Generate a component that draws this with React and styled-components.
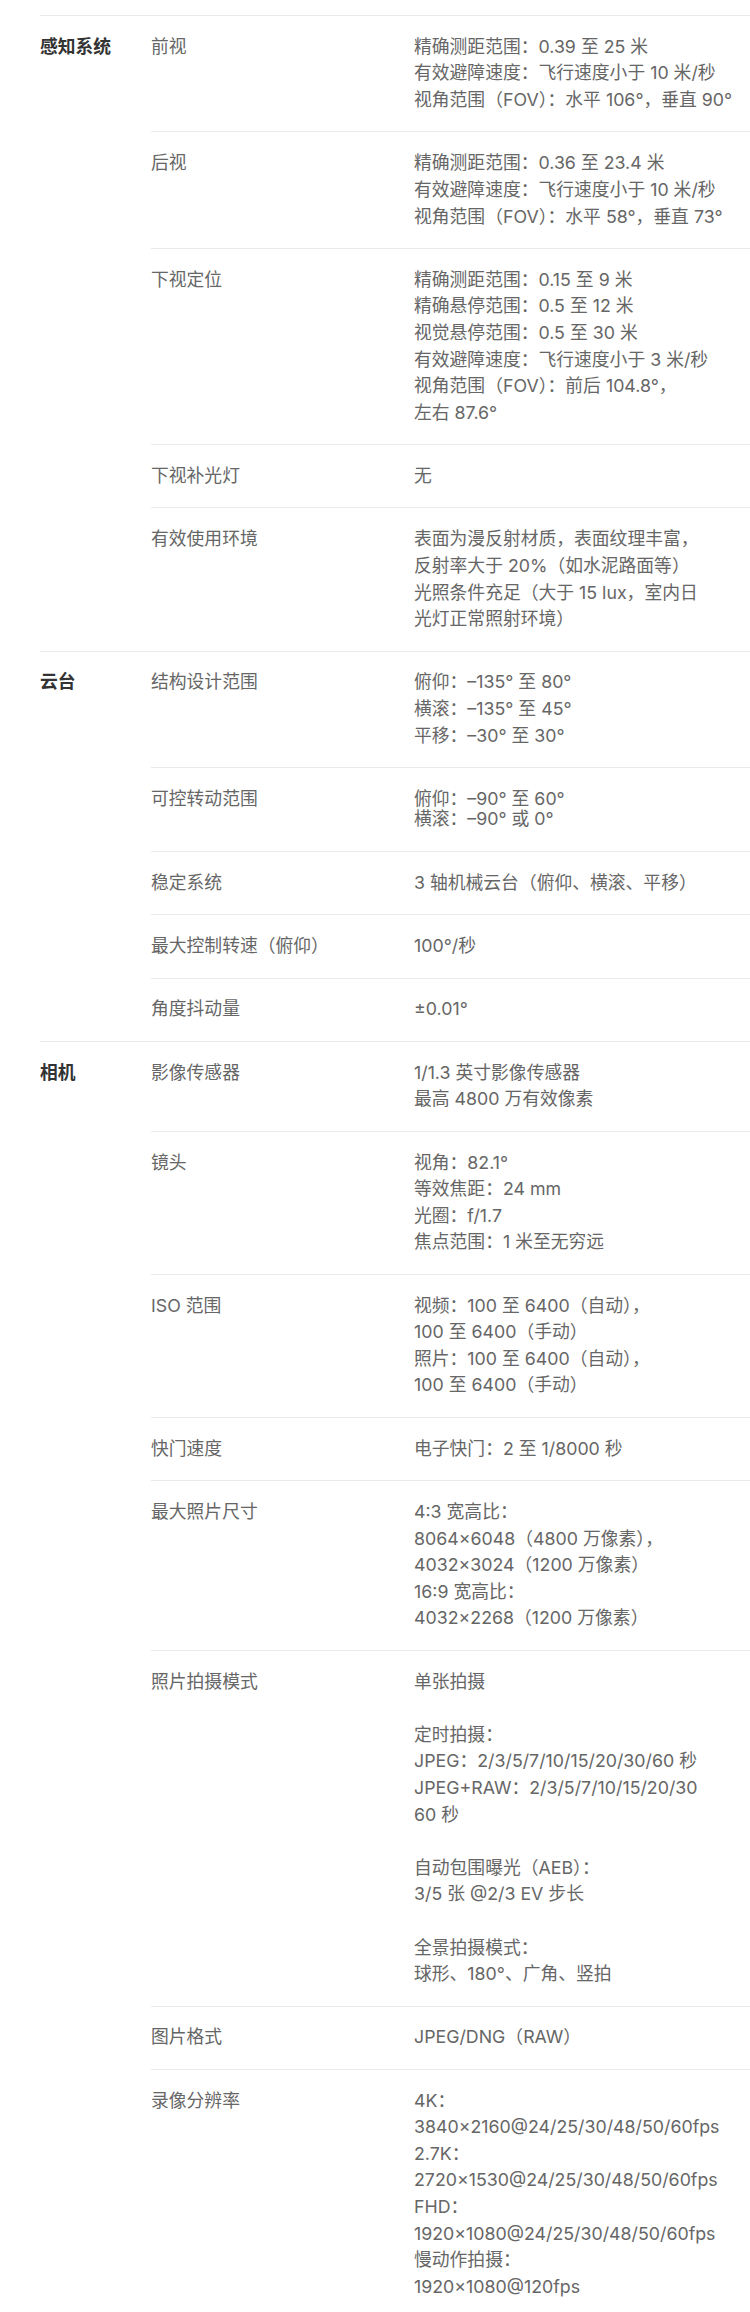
import React from 'react';
import styled, { createGlobalStyle } from 'styled-components';

const GlobalStyle = createGlobalStyle`
  html, body {
    margin: 0;
    padding: 0;
    background: #ffffff;
  }
  body {
    font-family: Inter, "Noto Sans CJK SC", sans-serif;
    -webkit-font-smoothing: antialiased;
    overflow-x: hidden;
  }
`;

const Page = styled.main`
  padding: 15px 0 0 40px;
  width: 750px;
  box-sizing: border-box;
`;

const Category = styled.section`
  display: grid;
  grid-template-columns: 111px 1fr;
  border-top: 1px solid #ebebeb;
`;

const CategoryTitle = styled.h3`
  margin: 0;
  padding: 17.85px 0;
  font-size: 17.8px;
  line-height: 26.6px;
  font-weight: 700;
  color: #333333;
`;

const Rows = styled.div`
  display: flex;
  flex-direction: column;
`;

const Row = styled.div`
  display: grid;
  grid-template-columns: 263px 1fr;
  align-items: start;
  padding: 17.85px 0;
  border-top: ${(p) => (p.$first ? 'none' : '1px solid #ebebeb')};
`;

const Label = styled.div`
  font-size: 17.8px;
  line-height: 26.6px;
  height: 26.6px;
  overflow: hidden;
  color: #666666;
`;

const Value = styled.div`
  font-size: 17.8px;
  padding: ${(p) => (p.$tight ? '3px 0 4.3px' : '0')};
  color: #666666;
`;

const Line = styled.div`
  white-space: nowrap;
  line-height: ${(p) => (p.$tight ? '20px' : '26.6px')};
  height: ${(p) => (p.$tight ? '20px' : '26.6px')};
`;

const data = [
  {
    title: '感知系统',
    rows: [
      {
        label: '前视',
        lines: [
          '精确测距范围：0.39 至 25 米',
          '有效避障速度：飞行速度小于 10 米/秒',
          '视角范围（FOV）：水平 106°，垂直 90°',
        ],
      },
      {
        label: '后视',
        lines: [
          '精确测距范围：0.36 至 23.4 米',
          '有效避障速度：飞行速度小于 10 米/秒',
          '视角范围（FOV）：水平 58°，垂直 73°',
        ],
      },
      {
        label: '下视定位',
        lines: [
          '精确测距范围：0.15 至 9 米',
          '精确悬停范围：0.5 至 12 米',
          '视觉悬停范围：0.5 至 30 米',
          '有效避障速度：飞行速度小于 3 米/秒',
          '视角范围（FOV）：前后 104.8°，',
          '左右 87.6°',
        ],
      },
      { label: '下视补光灯', lines: ['无'] },
      {
        label: '有效使用环境',
        lines: [
          '表面为漫反射材质，表面纹理丰富，',
          '反射率大于 20%（如水泥路面等）',
          '光照条件充足（大于 15 lux，室内日',
          '光灯正常照射环境）',
        ],
      },
    ],
  },
  {
    title: '云台',
    rows: [
      {
        label: '结构设计范围',
        lines: ['俯仰：–135° 至 80°', '横滚：–135° 至 45°', '平移：–30° 至 30°'],
      },
      {
        label: '可控转动范围',
        tight: true,
        lines: ['俯仰：–90° 至 60°', '横滚：–90° 或 0°'],
      },
      { label: '稳定系统', lines: ['3 轴机械云台（俯仰、横滚、平移）'] },
      { label: '最大控制转速（俯仰）', lines: ['100°/秒'] },
      { label: '角度抖动量', lines: ['±0.01°'] },
    ],
  },
  {
    title: '相机',
    rows: [
      {
        label: '影像传感器',
        lines: ['1/1.3 英寸影像传感器', '最高 4800 万有效像素'],
      },
      {
        label: '镜头',
        lines: ['视角：82.1°', '等效焦距：24 mm', '光圈：f/1.7', '焦点范围：1 米至无穷远'],
      },
      {
        label: 'ISO 范围',
        lines: [
          '视频：100 至 6400（自动），',
          '100 至 6400（手动）',
          '照片：100 至 6400（自动），',
          '100 至 6400（手动）',
        ],
      },
      { label: '快门速度', lines: ['电子快门：2 至 1/8000 秒'] },
      {
        label: '最大照片尺寸',
        lines: [
          '4:3 宽高比：',
          '8064×6048（4800 万像素），',
          '4032x3024（1200 万像素）',
          '16:9 宽高比：',
          '4032x2268（1200 万像素）',
        ],
      },
      {
        label: '照片拍摄模式',
        lines: [
          '单张拍摄',
          '',
          '定时拍摄：',
          'JPEG：2/3/5/7/10/15/20/30/60 秒',
          'JPEG+RAW：2/3/5/7/10/15/20/30',
          '60 秒',
          '',
          '自动包围曝光（AEB）：',
          '3/5 张 @2/3 EV 步长',
          '',
          '全景拍摄模式：',
          '球形、180°、广角、竖拍',
        ],
      },
      { label: '图片格式', lines: ['JPEG/DNG（RAW）'] },
      {
        label: '录像分辨率',
        lines: [
          '4K：',
          '3840×2160@24/25/30/48/50/60fps',
          '2.7K：',
          '2720×1530@24/25/30/48/50/60fps',
          'FHD：',
          '1920×1080@24/25/30/48/50/60fps',
          '慢动作拍摄：',
          '1920×1080@120fps',
        ],
      },
    ],
  },
];

export default function App() {
  return (
    <>
      <GlobalStyle />
      <Page>
        {data.map((cat) => (
          <Category key={cat.title}>
            <CategoryTitle>{cat.title}</CategoryTitle>
            <Rows>
              {cat.rows.map((row, i) => (
                <Row key={row.label} $first={i === 0}>
                  <Label>{row.label}</Label>
                  <Value $tight={row.tight}>
                    {row.lines.map((line, j) => (
                      <Line key={j} $tight={row.tight}>
                        {line}
                      </Line>
                    ))}
                  </Value>
                </Row>
              ))}
            </Rows>
          </Category>
        ))}
      </Page>
    </>
  );
}
